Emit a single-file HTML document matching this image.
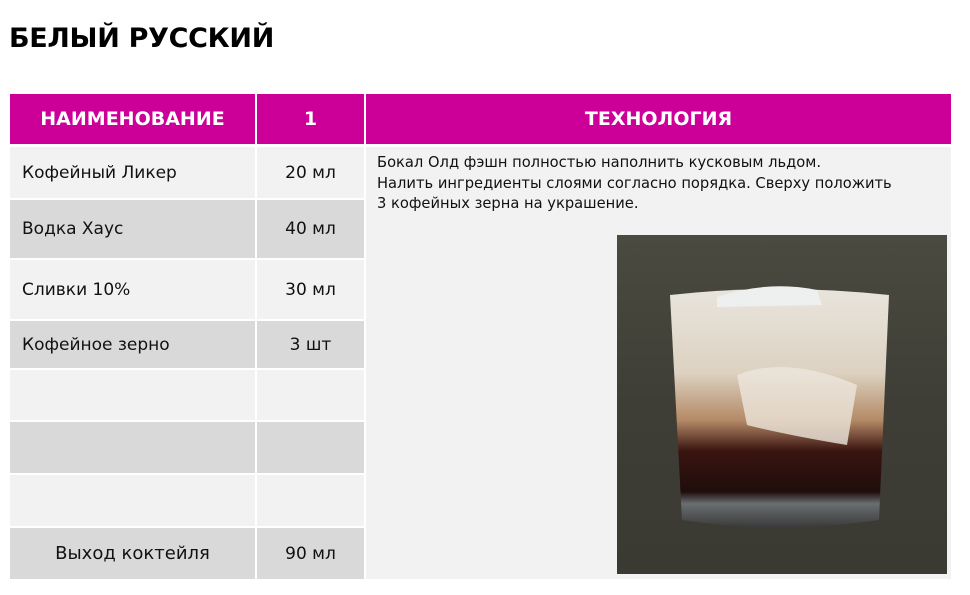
<!DOCTYPE html>
<html><head><meta charset="utf-8"><style>
body{margin:0;width:970px;height:595px;background:#fff;position:relative;font-family:Tahoma,"DejaVu Sans","Liberation Sans",sans-serif;overflow:hidden}
.a{position:absolute;box-sizing:border-box}
.h{background:#cc0099;color:#fff;font-weight:bold;font-size:19px;display:flex;align-items:center;justify-content:center}
.c{font-size:17px;color:#111;display:flex;align-items:center}
.l{background:#f2f2f2}.d{background:#d9d9d9}
</style></head><body>
<div class="a" style="left:9px;top:23px;font-size:27px;font-weight:bold;font-family:'DejaVu Sans',sans-serif;color:#000;letter-spacing:-0.3px">БЕЛЫЙ РУССКИЙ</div>
<div class="a h" style="left:10px;top:94px;width:245px;height:50px">НАИМЕНОВАНИЕ</div>
<div class="a h" style="left:257px;top:94px;width:107px;height:50px">1</div>
<div class="a h" style="left:366px;top:94px;width:585px;height:50px">ТЕХНОЛОГИЯ</div>
<div class="a l" style="left:366px;top:147px;width:585px;height:432px"></div>

<div class="a c l" style="left:10px;top:147px;width:245px;height:51px;padding-left:12px">Кофейный Ликер</div>
<div class="a c l" style="left:257px;top:147px;width:107px;height:51px;justify-content:center">20 мл</div>
<div class="a c d" style="left:10px;top:200px;width:245px;height:58px;padding-left:12px">Водка Хаус</div>
<div class="a c d" style="left:257px;top:200px;width:107px;height:58px;justify-content:center">40 мл</div>
<div class="a c l" style="left:10px;top:260px;width:245px;height:59px;padding-left:12px">Сливки 10%</div>
<div class="a c l" style="left:257px;top:260px;width:107px;height:59px;justify-content:center">30 мл</div>
<div class="a c d" style="left:10px;top:321px;width:245px;height:47px;padding-left:12px">Кофейное зерно</div>
<div class="a c d" style="left:257px;top:321px;width:107px;height:47px;justify-content:center">3 шт</div>
<div class="a l" style="left:10px;top:370px;width:245px;height:50px"></div>
<div class="a l" style="left:257px;top:370px;width:107px;height:50px"></div>
<div class="a d" style="left:10px;top:422px;width:245px;height:51px"></div>
<div class="a d" style="left:257px;top:422px;width:107px;height:51px"></div>
<div class="a l" style="left:10px;top:475px;width:245px;height:51px"></div>
<div class="a l" style="left:257px;top:475px;width:107px;height:51px"></div>
<div class="a c d" style="left:10px;top:528px;width:245px;height:51px;justify-content:center;font-size:18px">Выход коктейля</div>
<div class="a c d" style="left:257px;top:528px;width:107px;height:51px;justify-content:center">90 мл</div>

<div class="a" style="left:377px;top:153px;font-size:14.7px;line-height:20.5px;color:#111">Бокал Олд фэшн полностью наполнить кусковым льдом.<br>Налить ингредиенты слоями согласно порядка. Сверху положить<br>3 кофейных зерна на украшение.</div>

<svg class="a" style="left:617px;top:235px" width="330" height="339" viewBox="0 0 330 339">
<defs><linearGradient id="bg" x1="0" y1="0" x2="0" y2="1"><stop offset="0" stop-color="#4a4a40"/><stop offset="0.5" stop-color="#3e3e36"/><stop offset="1" stop-color="#3a3a32"/></linearGradient>
<linearGradient id="lq" x1="0" y1="0" x2="0" y2="1"><stop offset="0" stop-color="#e8e4dc"/><stop offset="0.35" stop-color="#ddd2c2"/><stop offset="0.55" stop-color="#b48a66"/><stop offset="0.68" stop-color="#3a1410"/><stop offset="0.85" stop-color="#1e0e0c"/><stop offset="0.9" stop-color="#6a6e70"/><stop offset="1" stop-color="#3a3a3a"/></linearGradient></defs>
<rect width="330" height="339" fill="url(#bg)"/>
<path d="M53 60 Q160 48 272 60 L262 285 Q160 300 65 285 Z" fill="url(#lq)"/>
<path d="M100 62 Q150 45 200 55 L205 70 L100 72Z" fill="#eef0f0"/>
<path d="M120 140 Q170 120 240 150 L230 210 Q170 200 130 190Z" fill="#ece6dc" opacity="0.8"/>
</svg>
</body></html>
